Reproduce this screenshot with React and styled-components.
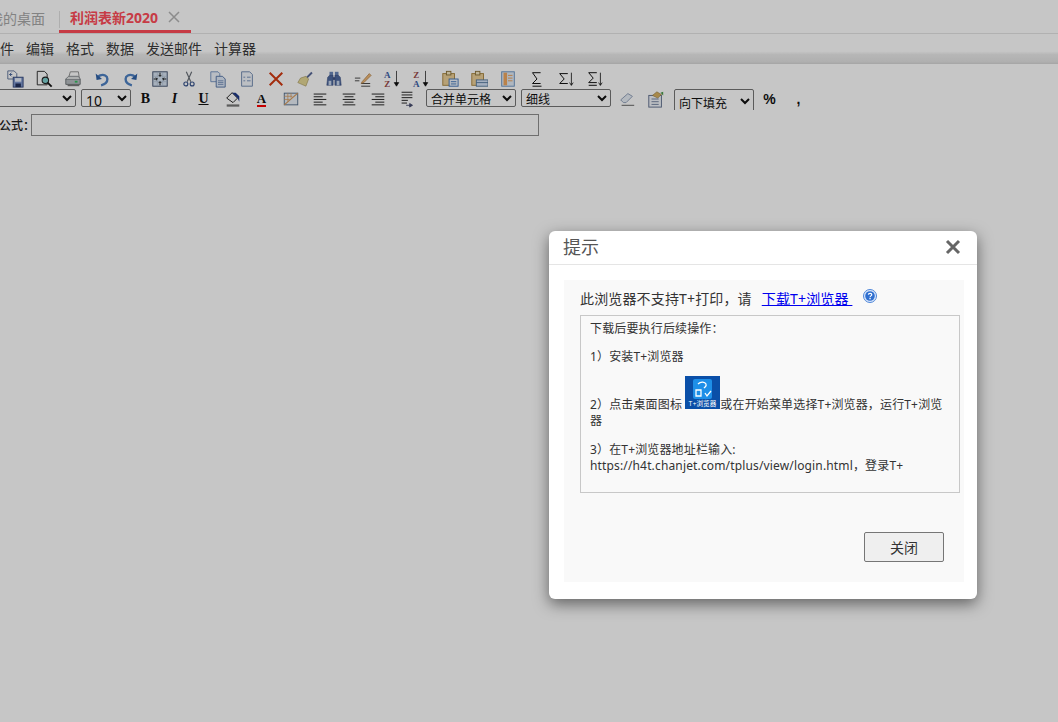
import styled, { createGlobalStyle } from "styled-components";

const GlobalStyle = createGlobalStyle`
  html, body { margin: 0; padding: 0; background: #fff; }
  body { font-family: "Noto Sans", "Noto Sans CJK SC", sans-serif; overflow: hidden; }
`;

const icons = {
  save: (
    <>
      <path d="M2 1h7l3 3v6H2z" fill="#fff" stroke="#5a6f98" />
      <path d="M7 5H4l2-2M4 5l2 2" fill="none" stroke="#3a5a96" />
      <rect x="8" y="8" width="11" height="11" fill="#7f97cc" stroke="#33477c" />
      <rect x="10" y="9" width="7" height="4" fill="#e8eefa" />
      <rect x="10.5" y="15" width="6" height="4" fill="#22305c" />
    </>
  ),
  preview: (
    <>
      <path d="M2.5 1.5h8l3 3v12h-11z" fill="#fff" stroke="#222" />
      <circle cx="11.5" cy="11.5" r="3.6" fill="#7fd0d0" stroke="#222" strokeWidth="1.2" />
      <path d="M14 14l4.5 4.5" stroke="#111" strokeWidth="2" />
    </>
  ),
  print: (
    <>
      <path d="M7 2h9l1 7H5z" fill="#fff" stroke="#8a8a8a" />
      <path d="M2 10h16v6H2z" fill="#b8bec2" stroke="#6a7074" />
      <path d="M2 10l3-3h11l2 3" fill="#dfe2e2" stroke="#80868a" />
      <rect x="12" y="12" width="3" height="2" fill="#35c060" />
      <rect x="4" y="16" width="13" height="2" fill="#7a7a7a" />
    </>
  ),
  undo: (
    <>
      <path d="M9 17c4-1 7-3.500 7-7 0-3.500-4-5.500-8-4L6 7" fill="none" stroke="#4f82c4" strokeWidth="2.600" />
      <path d="M3 4l1 7 6-1z" fill="#2f62a8" />
    </>
  ),
  redo: (
    <>
      <path d="M11 17c-4-1-7-3.500-7-7 0-3.500 4-5.500 8-4l2 1" fill="none" stroke="#4f82c4" strokeWidth="2.600" />
      <path d="M17 4l-1 7-6-1z" fill="#2f62a8" />
    </>
  ),
  fit: (
    <>
      <rect x="2" y="2" width="16" height="16" fill="#d8e4f2" stroke="#3a4a68" />
      <path d="M7 2v16M13 2v16M2 7h16M2 13h16" stroke="#a8bace" strokeWidth=".6" />
      <path d="M10 3v4M10 13v4M3 10h4M13 10h4" stroke="#111" />
      <path d="M8.500 5.500L10 7l1.500-1.500M8.500 14.500L10 13l1.500 1.500M5.500 8.500L7 10l-1.500 1.500M14.500 8.500L13 10l1.500 1.500" fill="none" stroke="#111" />
    </>
  ),
  cut: (
    <>
      <path d="M7 2l5 11M13 2L8 13" stroke="#6a7078" strokeWidth="1.300" />
      <circle cx="6.500" cy="15.500" r="2.200" fill="none" stroke="#3a568f" strokeWidth="1.300" />
      <circle cx="13.500" cy="15.500" r="2.200" fill="none" stroke="#3a568f" strokeWidth="1.300" />
    </>
  ),
  copy: (
    <>
      <path d="M2 2h8l2 2v9H2z" fill="#eef4fc" stroke="#6f8fbd" />
      <path d="M8 7h7l3 3v9H8z" fill="#dfe9f7" stroke="#4f6fa4" />
      <path d="M10 12h6M10 14h6M10 16h6" stroke="#5a7aac" strokeWidth=".8" />
    </>
  ),
  paste: (
    <>
      <path d="M4 2h9l3 3v13H4z" fill="#f2f6fc" stroke="#6a84ac" />
      <path d="M6 8h2M10 8h4M6 12h2M10 12h4" stroke="#4f6fa4" strokeWidth=".8" />
    </>
  ),
  remove: <path d="M3 3l14 14M17 3L3 17" stroke="#d23a12" strokeWidth="2.200" />,
  brush: (
    <>
      <path d="M11 8l6-6 1.500 1.500-6 6z" fill="#5a6a98" />
      <path d="M11 7l3 3-3 8-9-4 3-5z" fill="#e4d896" stroke="#9a8a50" strokeWidth=".6" />
    </>
  ),
  find: (
    <>
      <rect x="5" y="2" width="4" height="5" fill="#6a86b8" />
      <rect x="11" y="2" width="4" height="5" fill="#6a86b8" />
      <path d="M3 8l2-2h4v11H2zM17 8l-2-2h-4v11h7z" fill="#4f6aa0" stroke="#34487a" strokeWidth=".6" />
      <rect x="4" y="12" width="3" height="5" fill="#c8d6ec" />
      <rect x="13" y="12" width="3" height="5" fill="#c8d6ec" />
      <rect x="9" y="8" width="2" height="3" fill="#34487a" />
    </>
  ),
  edit: (
    <>
      <path d="M1 9h6M1 12h5M8 15h10M8 18h10" stroke="#222" strokeWidth=".9" />
      <path d="M9 13l8-9 2 2-8 8-3 1z" fill="#eeb878" stroke="#a6733a" strokeWidth=".7" />
    </>
  ),
  sortAz: (
    <>
      <text x="1" y="9" fontSize="10" fontWeight="700" fill="#3c5fa6" fontFamily="Liberation Serif, serif">A</text>
      <text x="1.500" y="19" fontSize="10" fontWeight="700" fill="#9a4a4a" fontFamily="Liberation Serif, serif">Z</text>
      <path d="M15 1v16M12.500 14l2.500 4 2.500-4z" stroke="#111" fill="#111" strokeWidth=".8" />
    </>
  ),
  sortZa: (
    <>
      <text x="1.500" y="9" fontSize="10" fontWeight="700" fill="#9a4a4a" fontFamily="Liberation Serif, serif">Z</text>
      <text x="1" y="19" fontSize="10" fontWeight="700" fill="#3c5fa6" fontFamily="Liberation Serif, serif">A</text>
      <path d="M15 1v16M12.500 14l2.500 4 2.500-4z" stroke="#111" fill="#111" strokeWidth=".8" />
    </>
  ),
  clipA: (
    <>
      <rect x="2" y="4" width="13" height="13" fill="#ecd098" stroke="#a8843c" />
      <rect x="6" y="1.500" width="5" height="4" fill="#f6e8c0" stroke="#8a7038" />
      <rect x="9" y="10" width="10" height="8" fill="#eef4fc" stroke="#3c72b8" />
      <path d="M11 13h6M11 15.500h6" stroke="#3c72b8" />
    </>
  ),
  clipB: (
    <>
      <rect x="2" y="4" width="13" height="13" fill="#ecd098" stroke="#a8843c" />
      <rect x="6" y="1.500" width="5" height="4" fill="#f6e8c0" stroke="#8a7038" />
      <rect x="7" y="11" width="13" height="7" fill="#d4e2f6" stroke="#54789c" />
      <path d="M7 14h13" stroke="#54789c" />
    </>
  ),
  book: (
    <>
      <rect x="3" y="2" width="14" height="16" fill="#e2ecf8" stroke="#6590c0" />
      <rect x="5" y="3" width="4" height="14" fill="#f0a860" />
      <path d="M10 6h5M10 9h5M10 12h5" stroke="#e89a50" />
    </>
  ),
  sum: <path d="M14 3H5l5 7-5 5h9M5 18h10" fill="none" stroke="#111" strokeWidth="1.100" />,
  sumAsc: (
    <>
      <path d="M12 4H3l5 6-5 5h9" fill="none" stroke="#111" strokeWidth="1.100" />
      <path d="M16 3v14M14 14l2 3 2-3" fill="none" stroke="#111" strokeWidth=".9" />
    </>
  ),
  sumDesc: (
    <>
      <path d="M12 3H3l5 6-5 5h9M3 17h9" fill="none" stroke="#111" strokeWidth="1.100" />
      <path d="M16 3v14M14 14l2 3 2-3" fill="none" stroke="#111" strokeWidth=".9" />
    </>
  ),
  bucket: (
    <>
      <path d="M3 9l6-6 6 6-5 5z" fill="#fff" stroke="#111" />
      <path d="M9 3l6 6 2 4V7l-4-4z" fill="#1f3a8a" />
      <rect x="3" y="16" width="14" height="2.500" fill="#777" />
    </>
  ),
  border: (
    <>
      <rect x="2.500" y="3.500" width="15" height="13" fill="#e8eff6" stroke="#506a88" />
      <path d="M2.500 16.500L17.500 3.500" stroke="#d89a5a" strokeWidth="1.300" />
      <path d="M2.500 7h9M2.500 10.500h6M6.500 3.500v9M10 3.500v5" stroke="#d89a5a" strokeWidth=".8" />
    </>
  ),
  alignLeft: <path d="M3 4.500h14M3 7.500h10M3 10.500h14M3 13.500h10M3 16.500h14" stroke="#111" />,
  alignCenter: <path d="M3 4.500h14M5 7.500h10M3 10.500h14M5 13.500h10M3 16.500h14" stroke="#111" />,
  alignRight: <path d="M3 4.500h14M7 7.500h10M3 10.500h14M7 13.500h10M3 16.500h14" stroke="#111" />,
  wrap: (
    <>
      <path d="M4 2.500h12M4 5.500h12M4 8.500h12M4 11.500h7M4 14.500h6" stroke="#111" />
      <path d="M9 17h7M13 15l3 2-3 2z" stroke="#4a4f70" fill="#4a4f70" />
    </>
  ),
  eraser: (
    <>
      <path d="M3 11l8-7 5 3-7 7H6z" fill="#e8eef6" stroke="#8a9ab4" />
      <path d="M4 17h14" stroke="#555" />
    </>
  ),
  format: (
    <>
      <rect x="2" y="6" width="14" height="13" fill="#f2f5fa" stroke="#5a6a8a" />
      <path d="M5 10h8M5 13h8M5 16h8" stroke="#6a7a9a" />
      <path d="M6 6l5-4 5 3-4 4z" fill="#d8b060" stroke="#90753a" strokeWidth=".6" />
      <path d="M15 3l3-1v4z" fill="#4a9a4a" />
    </>
  ),
};

const rowOne = [
  "save", "preview", "print", "undo", "redo", "fit", "cut", "copy", "paste", "remove", "brush",
  "find", "edit", "sortAz", "sortZa", "clipA", "clipB", "book", "sum", "sumAsc", "sumDesc",
];

const Glyph = ({ name }) => (
  <svg width="18" height="18" viewBox="0 0 20 20">
    {icons[name]}
  </svg>
);

export default function App() {
  return (
    <Page>
      <GlobalStyle />
      <TabBar>
        <Tab>我的桌面</Tab>
        <ActiveTab>
          利润表新2020
          <TabClose>
            <svg width="12" height="12" viewBox="0 0 12 12">
              <path d="M1 1l10 10M11 1L1 11" stroke="#b5b5b5" strokeWidth="1.500" />
            </svg>
          </TabClose>
        </ActiveTab>
      </TabBar>
      <MenuBar>
        {["文件", "编辑", "格式", "数据", "发送邮件", "计算器"].map((item) => (
          <MenuItem key={item}>{item}</MenuItem>
        ))}
      </MenuBar>
      <IconRow>
        {rowOne.map((name) => (
          <IconCell key={name}>
            <Glyph name={name} />
          </IconCell>
        ))}
      </IconRow>
      <FormatRow>
        <Select $width={100}>
          <option></option>
        </Select>
        <Select $width={50} $size={14}>
          <option>10</option>
        </Select>
        <Letters>
          <IconCell><Styled $serif>B</Styled></IconCell>
          <IconCell><Styled $serif $italic>I</Styled></IconCell>
          <IconCell><Styled $serif $underline>U</Styled></IconCell>
          <IconCell><Glyph name="bucket" /></IconCell>
          <IconCell>
            <FontColor>A</FontColor>
          </IconCell>
          <IconCell><Glyph name="border" /></IconCell>
          <IconCell><Glyph name="alignLeft" /></IconCell>
          <IconCell><Glyph name="alignCenter" /></IconCell>
          <IconCell><Glyph name="alignRight" /></IconCell>
          <IconCell><Glyph name="wrap" /></IconCell>
        </Letters>
        <Select $width={90} $gap={4}>
          <option>合并单元格</option>
        </Select>
        <Select $width={90} $gap={5}>
          <option>细线</option>
        </Select>
        <ToolPair>
          <IconCell><Glyph name="eraser" /></IconCell>
          <IconCell><Glyph name="format" /></IconCell>
        </ToolPair>
        <FillSelect>
          <option>向下填充</option>
        </FillSelect>
        <ToolPair>
          <IconCell><Styled>%</Styled></IconCell>
          <IconCell><Styled>,</Styled></IconCell>
        </ToolPair>
      </FormatRow>
      <FormulaRow>
        <FormulaLabel>公式：</FormulaLabel>
        <FormulaInput />
      </FormulaRow>

      <Overlay />
      <Dialog>
        <DialogHeader>
          <DialogTitle>提示</DialogTitle>
          <CloseX>
            <svg width="16" height="16" viewBox="0 0 16 16">
              <path d="M2 2l12 12M14 2L2 14" stroke="#666" strokeWidth="3" />
            </svg>
          </CloseX>
        </DialogHeader>
        <DialogBody>
          <Notice>
            此浏览器不支持T+打印，请
            <DownloadLink href="#">下载T+浏览器 </DownloadLink>
            <HelpIcon>
              <svg width="14" height="14" viewBox="0 0 14 14">
                <circle cx="7" cy="7" r="6.500" fill="#dbe8fb" stroke="#4f86d8" />
                <circle cx="7" cy="7" r="4.800" fill="#2f6fd0" />
                <path d="M5.300 5.600C5.500 3.900 8.800 3.900 8.800 5.700 8.800 6.900 7 6.900 7 8.300" fill="none" stroke="#fff" strokeWidth="1.200" />
                <rect x="6.400" y="9" width="1.300" height="1.300" fill="#fff" />
              </svg>
            </HelpIcon>
          </Notice>
          <Steps>
            <StepText>下载后要执行后续操作：</StepText>
            <StepText $top={12}>1）安装T+浏览器</StepText>
            <StepText $top={11}>
              2）点击桌面图标{" "}
              <AppIcon>
                <svg width="35" height="33" viewBox="0 0 35 33">
                  <rect width="35" height="33" fill="#0a4fa8" />
                  <rect x="8" y="3" width="19" height="20" rx="2" fill="#1e8fe8" />
                  <path d="M13 8c3-3 7-2 8 0 1 2-1 3-2 4M11 14h5v6h-5zM20 17l2 3 4-5" fill="none" stroke="#fff" strokeWidth="1.300" />
                  <text x="17.500" y="30" textAnchor="middle" fontSize="6.500" fill="#fff" fontFamily="Noto Sans CJK SC, sans-serif">T+浏览器</text>
                </svg>
              </AppIcon>
              或在开始菜单选择T+浏览器，运行T+浏览器
            </StepText>
            <StepText $top={13}>
              3）在T+浏览器地址栏输入:
              <br />
              https://h4t.chanjet.com/tplus/view/login.html，登录T+
            </StepText>
          </Steps>
          <Actions>
            <CloseButton>关闭</CloseButton>
          </Actions>
        </DialogBody>
      </Dialog>
    </Page>
  );
}

const Page = styled.div`
  position: relative;
  width: 1058px;
  height: 722px;
  overflow: hidden;
  background: #fff;
  color: #222;
`;

const TabBar = styled.div`
  display: flex;
  align-items: center;
  height: 33px;
  margin-left: -11px;
  border-bottom: 1px solid #e4e4e4;
  box-sizing: content-box;
`;

const Tab = styled.div`
  width: 70px;
  padding-top: 5px;
  font-size: 14px;
  line-height: 20px;
  color: #a8a8a8;
  white-space: nowrap;
`;

const ActiveTab = styled.div`
  position: relative;
  display: flex;
  align-items: center;
  height: 33px;
  box-sizing: border-box;
  width: 132px;
  padding: 3px 0 0 11px;
  font-size: 14px;
  font-weight: 700;
  color: #ff4d5a;
  border-bottom: 3px solid #ff4d5a;

  &::before {
    content: "";
    position: absolute;
    left: 0;
    top: 11px;
    height: 17px;
    border-left: 1px solid #e0e0e0;
  }
`;

const TabClose = styled.span`
  display: flex;
  margin-left: 10px;
`;

const MenuBar = styled.div`
  display: flex;
  gap: 12px;
  height: 30px;
  margin-left: -14px;
  padding-top: 5px;
  box-sizing: border-box;
  background: linear-gradient(#fff 0, #fff 58%, #ececec 68%, #e2e2e2 93%, #d4d4d4 100%);
`;

const MenuItem = styled.span`
  font-size: 14px;
  line-height: 20px;
  color: #3c3c3c;
`;

const IconRow = styled.div`
  display: flex;
  margin-top: 5px;
  height: 20px;
`;

const IconCell = styled.span`
  flex: none;
  display: flex;
  align-items: center;
  justify-content: center;
  width: 29px;
  height: 20px;
`;

const FormatRow = styled.div`
  display: flex;
  align-items: flex-start;
  margin-left: -29px;
  height: 25px;
`;

const Select = styled.select`
  flex: none;
  width: ${(p) => p.$width}px;
  height: 18px;
  margin-left: ${(p) => p.$gap ?? 5}px;
  padding: 0;
  font-family: "Noto Sans", "Noto Sans CJK SC", sans-serif;
  font-size: ${(p) => p.$size ?? 12}px;
  color: #111;
  background: #fff;
  border: 1px solid #767676;
  border-radius: 2px;
`;

const Letters = styled.div`
  display: flex;
  width: 291px;
`;

const ToolPair = styled.div`
  display: flex;
  margin-left: 1px;
`;

const FillSelect = styled(Select).attrs({ $width: 80, $gap: 4 })`
  height: 24px;
  padding-top: 4px;
  clip-path: inset(0 0 3px 0);
`;

const Styled = styled.span`
  font-family: ${(p) => (p.$serif ? '"Liberation Serif", serif' : '"Liberation Sans", sans-serif')};
  font-size: 14px;
  font-weight: 700;
  line-height: 18px;
  color: #111;
  font-style: ${(p) => (p.$italic ? "italic" : "normal")};
  text-decoration: ${(p) => (p.$underline ? "underline" : "none")};
`;

const FontColor = styled.span`
  font-family: "Liberation Serif", serif;
  font-size: 13px;
  font-weight: 700;
  line-height: 13px;
  color: #111;
  border-bottom: 2px solid #f00;
`;

const FormulaRow = styled.div`
  display: flex;
  align-items: center;
  height: 22px;
  margin-left: -1px;
`;

const FormulaLabel = styled.span`
  width: 32px;
  font-size: 12px;
  font-weight: 500;
  white-space: nowrap;
  color: #222;
`;

const FormulaInput = styled.input`
  width: 508px;
  height: 22px;
  box-sizing: border-box;
  background: #fff;
  border: 1px solid #8f8f8f;
  border-radius: 0;
`;

const Overlay = styled.div`
  position: absolute;
  inset: 0;
  background: rgba(0, 0, 0, 0.222);
`;

const Dialog = styled.div`
  position: absolute;
  left: 549px;
  top: 231px;
  width: 428px;
  height: 368px;
  box-sizing: border-box;
  background: #fff;
  border-radius: 6px;
  box-shadow: 0 5px 15px rgba(0, 0, 0, 0.5);
`;

const DialogHeader = styled.div`
  display: flex;
  align-items: center;
  justify-content: space-between;
  height: 34px;
  box-sizing: border-box;
  padding: 0 16px 2px 14px;
  border-bottom: 1px solid #e5e5e5;
`;

const DialogTitle = styled.div`
  font-size: 18px;
  line-height: 30px;
  color: #555;
`;

const CloseX = styled.span`
  display: flex;
`;

const DialogBody = styled.div`
  display: flex;
  flex-direction: column;
  width: 400px;
  height: 302px;
  box-sizing: border-box;
  margin: 15px 0 0 15px;
  padding: 9px 4px 0 16px;
  background: #f9f9f9;
`;

const Notice = styled.div`
  display: flex;
  align-items: flex-start;
  height: 26px;
  font-size: 14px;
  line-height: 20px;
  letter-spacing: 0.15px;
  color: #333;
`;

const DownloadLink = styled.a`
  margin-left: 10px;
  color: #0000ee;
  text-decoration: underline;
  white-space: pre;
`;

const HelpIcon = styled.span`
  display: flex;
  margin: 0 0 0 11px;
`;

const Steps = styled.div`
  width: 380px;
  height: 178px;
  box-sizing: border-box;
  padding: 5px 10px 0 9px;
  border: 1px solid #c8c8c8;
`;

const StepText = styled.div`
  margin-top: ${(p) => p.$top ?? 0}px;
  font-size: 12px;
  line-height: 16px;
  letter-spacing: 0.15px;
  color: #333;
  word-break: break-all;
`;

const AppIcon = styled.span`
  display: inline-block;
  vertical-align: baseline;
  width: 35px;
  height: 33px;

  svg {
    display: block;
  }
`;

const Actions = styled.div`
  display: flex;
  justify-content: flex-end;
  margin-top: 39px;
  padding-right: 16px;
`;

const CloseButton = styled.button`
  width: 80px;
  height: 30px;
  font-family: "Noto Sans", "Noto Sans CJK SC", sans-serif;
  font-size: 14px;
  color: #333;
  background: #efefef;
  border: 1px solid #767676;
  border-radius: 2px;
`;
